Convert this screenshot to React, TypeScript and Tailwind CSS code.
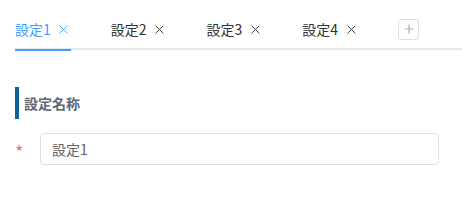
import React from 'react';

const tabs = ['設定1', '設定2', '設定3', '設定4'];

function CloseIcon() {
  return (
    <span className="ml-[6px] flex h-[14px] w-[14px] items-center justify-center">
      <svg width="9" height="9" viewBox="0 0 9 9" fill="none">
        <path d="M0.5 0.5L8.5 8.5M8.5 0.5L0.5 8.5" stroke="currentColor" strokeWidth="0.9" />
      </svg>
    </span>
  );
}

export default function App() {
  return (
    <div
      className="min-h-screen bg-white pt-[10px] pl-[15px]"
      style={{ fontFamily: '"Noto Sans CJK JP", "Noto Sans", sans-serif' }}
    >
      {/* Tabs */}
      <div className="flex h-[40px] items-center border-b-2 border-[#e4e7ed]">
        {tabs.map((t, i) => {
          const active = i === 0;
          return (
            <div
              key={t}
              className={`flex h-[40px] items-center pr-[20px] ${i === 0 ? 'pl-0' : 'pl-[20px]'}`}
            >
              <div
                className={`relative flex h-[40px] items-center text-[14px] ${
                  active ? 'text-[#409eff]' : 'text-[#303133]'
                }`}
              >
                <span>{t}</span>
                <CloseIcon />
                {active && (
                  <span className="absolute left-0 right-0 bottom-[-2px] h-[2px] bg-[#409eff]" />
                )}
              </div>
            </div>
          );
        })}
        <button className="ml-[20px] flex h-[21px] w-[21px] items-center justify-center rounded-[3px] border border-[#dcdfe6] text-[#a8abb2]">
          <svg width="10" height="10" viewBox="0 0 10 10" fill="none">
            <path d="M5 0.5V9.5M0.5 5H9.5" stroke="currentColor" strokeWidth="1.2" />
          </svg>
        </button>
      </div>

      {/* Section */}
      <div className="mt-[37px] flex h-[32px] items-center border-l-4 border-[#0b6294] pl-[5px]">
        <span className="text-[14px] font-bold text-[#5c6679]">設定名称</span>
      </div>

      {/* Form row */}
      <div className="mt-[14px] flex items-center pr-[23px]">
        <span className="w-[25px] pt-[3px] text-[18px] leading-none text-[#f56c6c]">*</span>
        <div className="flex h-[32px] flex-1 items-center rounded-[4px] border border-[#dcdfe6] px-[11px] text-[14px] text-[#606266]">
          設定1
        </div>
      </div>
    </div>
  );
}
